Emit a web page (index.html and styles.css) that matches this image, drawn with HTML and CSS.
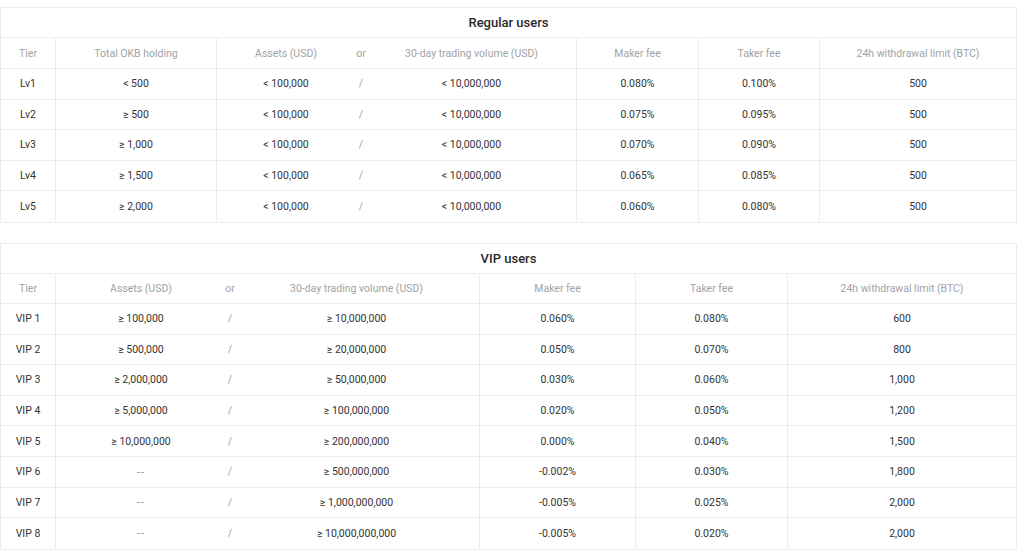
FILE: index.html
```html
<!DOCTYPE html>
<html lang="en">
<head>
<meta charset="utf-8">
<title>Fee tiers</title>
<link rel="stylesheet" href="styles.css">
</head>
<body>
<div class="page">
  <div class="fee-table regular">
    <div class="title">Regular users</div>
    <div class="row head">
      <div class="c b">Tier</div>
      <div class="c b">Total OKB holding</div>
      <div class="c">Assets (USD)</div>
      <div class="c">or</div>
      <div class="c b">30-day trading volume (USD)</div>
      <div class="c b">Maker fee</div>
      <div class="c b">Taker fee</div>
      <div class="c">24h withdrawal limit (BTC)</div>
    </div>
    <div class="row"><div class="c b">Lv1</div><div class="c b">&lt; 500</div><div class="c">&lt; 100,000</div><div class="c mute">/</div><div class="c b">&lt; 10,000,000</div><div class="c b">0.080%</div><div class="c b">0.100%</div><div class="c">500</div></div>
    <div class="row"><div class="c b">Lv2</div><div class="c b">≥ 500</div><div class="c">&lt; 100,000</div><div class="c mute">/</div><div class="c b">&lt; 10,000,000</div><div class="c b">0.075%</div><div class="c b">0.095%</div><div class="c">500</div></div>
    <div class="row"><div class="c b">Lv3</div><div class="c b">≥ 1,000</div><div class="c">&lt; 100,000</div><div class="c mute">/</div><div class="c b">&lt; 10,000,000</div><div class="c b">0.070%</div><div class="c b">0.090%</div><div class="c">500</div></div>
    <div class="row"><div class="c b">Lv4</div><div class="c b">≥ 1,500</div><div class="c">&lt; 100,000</div><div class="c mute">/</div><div class="c b">&lt; 10,000,000</div><div class="c b">0.065%</div><div class="c b">0.085%</div><div class="c">500</div></div>
    <div class="row"><div class="c b">Lv5</div><div class="c b">≥ 2,000</div><div class="c">&lt; 100,000</div><div class="c mute">/</div><div class="c b">&lt; 10,000,000</div><div class="c b">0.060%</div><div class="c b">0.080%</div><div class="c">500</div></div>
  </div>

  <div class="fee-table vip">
    <div class="title">VIP users</div>
    <div class="row head">
      <div class="c b">Tier</div>
      <div class="c">Assets (USD)</div>
      <div class="c">or</div>
      <div class="c b">30-day trading volume (USD)</div>
      <div class="c b">Maker fee</div>
      <div class="c b">Taker fee</div>
      <div class="c">24h withdrawal limit (BTC)</div>
    </div>
    <div class="row"><div class="c b">VIP 1</div><div class="c">≥ 100,000</div><div class="c mute">/</div><div class="c b">≥ 10,000,000</div><div class="c b">0.060%</div><div class="c b">0.080%</div><div class="c">600</div></div>
    <div class="row"><div class="c b">VIP 2</div><div class="c">≥ 500,000</div><div class="c mute">/</div><div class="c b">≥ 20,000,000</div><div class="c b">0.050%</div><div class="c b">0.070%</div><div class="c">800</div></div>
    <div class="row"><div class="c b">VIP 3</div><div class="c">≥ 2,000,000</div><div class="c mute">/</div><div class="c b">≥ 50,000,000</div><div class="c b">0.030%</div><div class="c b">0.060%</div><div class="c">1,000</div></div>
    <div class="row"><div class="c b">VIP 4</div><div class="c">≥ 5,000,000</div><div class="c mute">/</div><div class="c b">≥ 100,000,000</div><div class="c b">0.020%</div><div class="c b">0.050%</div><div class="c">1,200</div></div>
    <div class="row"><div class="c b">VIP 5</div><div class="c">≥ 10,000,000</div><div class="c mute">/</div><div class="c b">≥ 200,000,000</div><div class="c b">0.000%</div><div class="c b">0.040%</div><div class="c">1,500</div></div>
    <div class="row"><div class="c b">VIP 6</div><div class="c mute dash">--</div><div class="c mute">/</div><div class="c b">≥ 500,000,000</div><div class="c b">-0.002%</div><div class="c b">0.030%</div><div class="c">1,800</div></div>
    <div class="row"><div class="c b">VIP 7</div><div class="c mute dash">--</div><div class="c mute">/</div><div class="c b">≥ 1,000,000,000</div><div class="c b">-0.005%</div><div class="c b">0.025%</div><div class="c">2,000</div></div>
    <div class="row"><div class="c b">VIP 8</div><div class="c mute dash">--</div><div class="c mute">/</div><div class="c b">≥ 10,000,000,000</div><div class="c b">-0.005%</div><div class="c b">0.020%</div><div class="c">2,000</div></div>
  </div>
</div>
</body>
</html>
```

FILE: styles.css
```css
html, body {
  margin: 0;
  padding: 0;
  background: #ffffff;
}
body {
  font-family: Roboto, "Liberation Sans", sans-serif;
  color: #333333;
}
.page {
  padding-top: 7px;
  display: flex;
  flex-direction: column;
  gap: 20px;
}
.fee-table {
  width: 1017px;
  box-sizing: border-box;
  border: 1px solid #ececec;
}
.title {
  height: 30px;
  box-sizing: border-box;
  border-bottom: 1px solid #ececec;
  display: flex;
  align-items: center;
  justify-content: center;
  font-size: 13px;
  font-weight: 500;
  color: #2a2a2a;
}
.row {
  display: grid;
  height: 30.6px;
  box-sizing: border-box;
  border-bottom: 1px solid #ececec;
  font-size: 10.5px;
}
.row:last-child {
  border-bottom: none;
}
.regular .row {
  grid-template-columns: 55px 161px 138px 12px 210px 122px 121px 196px;
}
.regular .row.head {
  height: 31px;
}
.vip .row {
  grid-template-columns: 55px 170px 8px 246px 156px 152px 228px;
}
.vip .row.head {
  height: 30px;
}
.c {
  display: flex;
  align-items: center;
  justify-content: center;
  white-space: nowrap;
  box-sizing: border-box;
}
.b {
  border-right: 1px solid #ececec;
}
.head .c {
  color: #a3a3a3;
}
.c.mute {
  color: #a3a3a3;
}
.c.dash {
  font-size: 12px;
  letter-spacing: 1px;
}
```
